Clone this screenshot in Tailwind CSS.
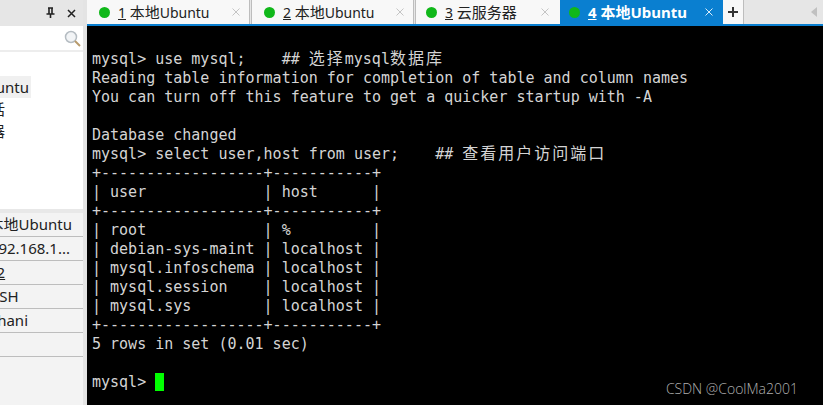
<html lang="zh">
<head>
    <meta charset="UTF-8">
    <title>MobaXterm</title>
    <script src="https://cdn.jsdelivr.net/npm/@tailwindcss/browser@4"></script>
</head>
<body class="overflow-hidden">
    <div class="flex w-[823px] h-[405px] bg-black font-['Noto_Sans','Noto_Sans_CJK_SC',sans-serif]">

        <!-- SIDEBAR -->
        <aside class="flex flex-col w-[87px] shrink-0 bg-[#f3f3f3] border-r-4 border-[#e4e4e4]">
            <div class="flex items-center justify-end gap-[12px] h-[26px] pr-[7px] bg-[#e6e6e6]">
                <svg class="w-[9px] h-[12px]" viewBox="0 0 9 12"><path d="M2 1h5M3 1v6M6 1v6M0.5 7h8M4.5 7v4" stroke="#222" stroke-width="1.6" fill="none"/></svg>
                <svg class="w-[9px] h-[9px]" viewBox="0 0 9 9"><path d="M1 1l7 7M8 1l-7 7" stroke="#222" stroke-width="1.5"/></svg>
            </div>
            <div class="flex items-center justify-end h-[26px] pr-[2px] bg-white border-b-2 border-[#ededed]">
                <svg class="w-[17px] h-[17px]" viewBox="0 0 17 17"><circle cx="7" cy="7" r="5.5" fill="#f2f4f6" stroke="#b5bcc2" stroke-width="1.5"/><path d="M11 11l5 5" stroke="#b89a6c" stroke-width="2"/></svg>
            </div>
            <div class="flex flex-col h-[157px] pt-[24px] bg-white text-[15px] text-[#222]">
                <div class="flex justify-end h-[22px] w-[31px] pr-[2px] overflow-hidden bg-[#f0f0f0] leading-[22px] whitespace-nowrap">本地Ubuntu</div>
                <div class="flex h-[22px] overflow-hidden leading-[22px] whitespace-nowrap"><span class="ml-[-10px]">话</span></div>
                <div class="flex h-[22px] overflow-hidden leading-[22px] whitespace-nowrap"><span class="ml-[-10px]">器</span></div>
            </div>
            <div class="h-[4px] bg-[#e8e8e8]"></div>
            <div class="flex flex-col text-[15px] text-[#222]">
                <div class="flex justify-end h-[24px] pr-[11px] overflow-hidden whitespace-nowrap border-b border-[#bdbdbd] leading-[22px]">本地Ubuntu</div>
                <div class="flex justify-end h-[24px] pr-[13px] overflow-hidden whitespace-nowrap border-b border-[#bdbdbd] leading-[22px]">192.168.1...</div>
                <div class="flex h-[24px] overflow-hidden whitespace-nowrap border-b border-[#bdbdbd] leading-[22px]"><span class="underline ml-[-12px]">22</span></div>
                <div class="flex h-[24px] overflow-hidden whitespace-nowrap border-b border-[#bdbdbd] leading-[22px]"><span class="ml-[-9px]">SSH</span></div>
                <div class="flex h-[24px] overflow-hidden whitespace-nowrap border-b border-[#bdbdbd] leading-[22px]"><span class="ml-[-10px]">shani</span></div>
                <div class="h-[24px] border-b border-[#bdbdbd]"></div>
            </div>
        </aside>

        <!-- MAIN -->
        <main class="flex flex-col flex-1 min-w-0">
            <!-- TABS -->
            <div class="flex items-stretch h-[26px] shrink-0 bg-[#e6e6e6] border-b-2 border-[#0a7fd0] text-[14px] text-[#222]">
                <div class="flex items-center w-[162px] pl-[12px] pr-[9px] bg-[#f8f8f8]">
                    <span class="w-[11px] h-[11px] rounded-full bg-[#10b81a] mr-[8px]"></span>
                    <span><u>1</u> <span class="text-[15px]">本地</span>Ubuntu</span>
                    <svg class="ml-auto w-[8px] h-[8px]" viewBox="0 0 8 8"><path d="M0.5 0.5l7 7M7.5 0.5l-7 7" stroke="#c4c4c4"/></svg>
                </div>
                <div class="w-[3px] border-x border-[#bdbdbd]"></div>
                <div class="flex items-center w-[161px] pl-[12px] pr-[9px] bg-[#f8f8f8]">
                    <span class="w-[11px] h-[11px] rounded-full bg-[#10b81a] mr-[8px]"></span>
                    <span><u>2</u> <span class="text-[15px]">本地</span>Ubuntu</span>
                    <svg class="ml-auto w-[8px] h-[8px]" viewBox="0 0 8 8"><path d="M0.5 0.5l7 7M7.5 0.5l-7 7" stroke="#c4c4c4"/></svg>
                </div>
                <div class="w-[3px] border-x border-[#bdbdbd]"></div>
                <div class="flex items-center w-[144px] pl-[10px] pr-[11px] bg-[#f8f8f8]">
                    <span class="w-[11px] h-[11px] rounded-full bg-[#10b81a] mr-[8px]"></span>
                    <span><u>3</u> <span class="text-[15px]">云服务器</span></span>
                    <svg class="ml-auto w-[8px] h-[8px]" viewBox="0 0 8 8"><path d="M0.5 0.5l7 7M7.5 0.5l-7 7" stroke="#c4c4c4"/></svg>
                </div>
                <div class="flex items-center w-[163px] pl-[9px] pr-[10px] bg-[#0a7fd0] text-[15px] text-white font-bold">
                    <span class="w-[11px] h-[11px] rounded-full bg-[#10b81a] mr-[8px]"></span>
                    <span><u>4</u> 本地Ubuntu</span>
                    <svg class="ml-auto w-[8px] h-[8px]" viewBox="0 0 8 8"><path d="M0.5 0.5l7 7M7.5 0.5l-7 7" stroke="#d8ecfa"/></svg>
                </div>
                <div class="flex items-center justify-center w-[21px] bg-[#f8f8f8] border-r border-[#bdbdbd]">
                    <svg class="w-[10px] h-[10px]" viewBox="0 0 10 10"><path d="M5 0v10M0 5h10" stroke="#333" stroke-width="2"/></svg>
                </div>
                <div class="flex items-center justify-end flex-1 pr-[6px]">
                    <svg class="w-[6px] h-[10px]" viewBox="0 0 6 10"><path d="M6 0v10L0 5z" fill="#c0c0c0"/></svg>
                </div>
            </div>

            <!-- TERMINAL -->
            <div class="relative flex-1 pt-[24px] pl-[5px] text-[15px] leading-[19px] text-[#d4d4d4] font-['DejaVu_Sans_Mono','Noto_Sans_CJK_SC',monospace]">
<pre class="font-[inherit]">mysql&gt; use mysql;    ## <span class="text-[16px] leading-none tracking-[2px]">选择</span>mysql<span class="text-[16px] leading-none tracking-[2px]">数据库</span>
Reading table information for completion of table and column names
You can turn off this feature to get a quicker startup with -A

Database changed
mysql&gt; select user,host from user;    ## <span class="text-[16px] leading-none tracking-[2px]">查看用户访问端口</span>
+------------------+-----------+
| user             | host      |
+------------------+-----------+
| root             | %         |
| debian-sys-maint | localhost |
| mysql.infoschema | localhost |
| mysql.session    | localhost |
| mysql.sys        | localhost |
+------------------+-----------+
5 rows in set (0.01 sec)

mysql&gt; <span class="inline-block w-[9px] h-[18px] align-top bg-[#00ff00]"></span></pre>
                <div class="absolute right-[25px] bottom-[7px] text-[14px] font-light leading-[19px] text-[#b0b0b0] font-['Open_Sans',sans-serif]">CSDN @CoolMa2001</div>
            </div>
        </main>
    </div>
</body>
</html>
